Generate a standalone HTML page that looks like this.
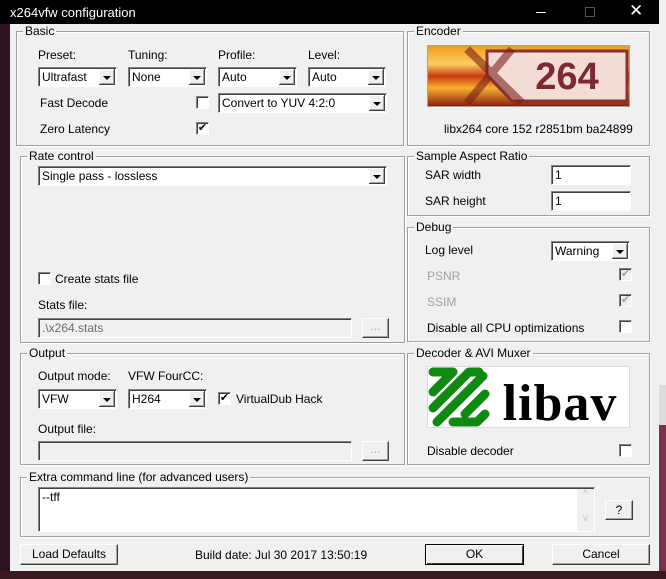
<!DOCTYPE html>
<html><head><meta charset="utf-8"><style>
*{box-sizing:border-box;margin:0;padding:0}
body{width:666px;height:579px;overflow:hidden;background:#2a1420;font-family:"Liberation Sans",sans-serif;font-size:12px;color:#000;position:relative}
.a{position:absolute}
#title{left:0;top:0;width:659px;height:24px;background:#000;color:#fff;font-size:12px}
#win{left:10px;top:24px;width:649px;height:547px;background:#f0f0f0}
.g{position:absolute;border:1px solid #a0a0a0;box-shadow:inset 1px 1px 0 #fff,1px 1px 0 #fff}
.lg{position:absolute;top:-8px;left:6px;background:#f0f0f0;padding:0 2px;line-height:14px;white-space:nowrap}
.t{position:absolute;white-space:nowrap;line-height:14px}
.cb{position:absolute;height:20px;background:#fff;border:1px solid;border-color:#828282 #fff #fff #828282;box-shadow:inset 1px 1px 0 #404040;padding:2px 0 0 3px;line-height:14px;white-space:nowrap}
.cb::after{content:"";position:absolute;right:1px;top:1px;width:16px;height:16px;background:#f0f0f0;box-shadow:inset -1px -1px 0 #404040,inset 1px 1px 0 #fff,inset -2px -2px 0 #a0a0a0}
.cb::before{content:"";position:absolute;right:5px;top:8px;border:4px solid transparent;border-top:4px solid #000;border-bottom:0;z-index:2}
.ck{position:absolute;width:13px;height:13px;background:#fff;border:1px solid;border-color:#828282 #fff #fff #828282;box-shadow:inset 1px 1px 0 #404040;font-size:11px;line-height:11px;text-align:center}
.ck.d{background:#f0f0f0;color:#a0a0a0}
.ed{position:absolute;height:20px;background:#fff;border:1px solid;border-color:#828282 #fff #fff #828282;box-shadow:inset 1px 1px 0 #404040;padding:2px 3px;line-height:14px}
.ed.d{background:#f0f0f0;color:#6d6d6d}
.bt{position:absolute;background:#f0f0f0;border:1px solid;border-color:#fff #404040 #404040 #fff;box-shadow:inset -1px -1px 0 #a0a0a0;text-align:center;line-height:18px}
.gr{color:#a0a0a0}
</style></head><body>
<div class="a" style="left:659px;top:0;width:7px;height:385px;background:#f0f0f0"></div>
<div class="a" style="left:659px;top:385px;width:7px;height:40px;background:#dcdcdc"></div>
<div class="a" style="left:659px;top:425px;width:7px;height:154px;background:#7a3050"></div>
<div class="a" style="left:0;top:571px;width:666px;height:8px;background:#3a1a20"></div>
<div id="title" class="a"><span class="a" style="left:10px;top:5px;font-size:13px">x264vfw configuration</span>
<span class="a" style="left:536px;top:12px;width:10px;height:1px;background:#fff"></span>
<span class="a" style="left:585px;top:7px;width:10px;height:10px;border:1px solid #555"></span>
<span class="a" style="left:629px;top:2px;font-size:17px;line-height:18px">✕</span></div>
<div id="win" class="a"></div>

<div class="g" style="left:16px;top:31px;width:388px;height:115px"><span class="lg">Basic</span></div>
<span class="t" style="left:38px;top:48px">Preset:</span>
<span class="t" style="left:128px;top:48px">Tuning:</span>
<span class="t" style="left:218px;top:48px">Profile:</span>
<span class="t" style="left:308px;top:48px">Level:</span>
<div class="cb" style="left:38px;top:67px;width:79px">Ultrafast</div>
<div class="cb" style="left:128px;top:67px;width:79px">None</div>
<div class="cb" style="left:218px;top:67px;width:79px">Auto</div>
<div class="cb" style="left:308px;top:67px;width:78px">Auto</div>
<span class="t" style="left:40px;top:96px">Fast Decode</span>
<div class="ck" style="left:196px;top:96px"></div>
<div class="cb" style="left:218px;top:93px;width:169px">Convert to YUV 4:2:0</div>
<span class="t" style="left:40px;top:122px">Zero Latency</span>
<div class="ck" style="left:196px;top:122px">✔</div>

<div class="g" style="left:407px;top:31px;width:243px;height:115px"><span class="lg">Encoder</span></div>
<svg class="a" style="left:427px;top:45px" width="203" height="62" viewBox="0 0 203 62">
<defs><linearGradient id="f" x1="0" y1="0" x2="0" y2="1"><stop offset="0" stop-color="#f39a20"/><stop offset=".3" stop-color="#fbd060"/><stop offset=".5" stop-color="#c83a10"/><stop offset=".7" stop-color="#f8b030"/><stop offset="1" stop-color="#8a2010"/></linearGradient></defs>
<rect width="203" height="62" fill="#a0a0a0"/><rect x="1" y="1" width="201" height="60" fill="url(#f)"/>
<path d="M60 6 H200 V56 H85 L60 30 Z" fill="#f3dcd6"/>
<path d="M60 6 H200 V56 H85 L60 30 Z" fill="none" stroke="#8a3030" stroke-width="3"/>
<path d="M40 4 L95 58 M85 4 L40 58" stroke="#7a2218" stroke-width="8" opacity=".6"/>
<text x="140" y="44" text-anchor="middle" font-family="Liberation Sans,sans-serif" font-weight="bold" font-size="38" fill="#7a2a30">264</text>
</svg>
<span class="t" style="left:444px;top:122px">libx264 core 152 r2851bm ba24899</span>

<div class="g" style="left:20px;top:156px;width:385px;height:187px"><span class="lg">Rate control</span></div>
<div class="cb" style="left:38px;top:166px;width:349px">Single pass - lossless</div>
<div class="ck" style="left:38px;top:272px"></div>
<span class="t" style="left:55px;top:272px">Create stats file</span>
<span class="t" style="left:38px;top:298px">Stats file:</span>
<div class="ed d" style="left:38px;top:318px;width:314px">.\x264.stats</div>
<div class="bt gr" style="left:362px;top:318px;width:27px;height:20px;line-height:14px">...</div>

<div class="g" style="left:407px;top:156px;width:243px;height:60px"><span class="lg">Sample Aspect Ratio</span></div>
<span class="t" style="left:425px;top:168px">SAR width</span>
<div class="ed" style="left:551px;top:165px;width:80px">1</div>
<span class="t" style="left:425px;top:194px">SAR height</span>
<div class="ed" style="left:551px;top:191px;width:80px">1</div>

<div class="g" style="left:407px;top:227px;width:243px;height:115px"><span class="lg">Debug</span></div>
<span class="t" style="left:425px;top:243px">Log level</span>
<div class="cb" style="left:551px;top:241px;width:79px">Warning</div>
<span class="t gr" style="left:427px;top:269px">PSNR</span>
<div class="ck d" style="left:619px;top:268px">✔</div>
<span class="t gr" style="left:427px;top:295px">SSIM</span>
<div class="ck d" style="left:619px;top:294px">✔</div>
<span class="t" style="left:427px;top:321px">Disable all CPU optimizations</span>
<div class="ck" style="left:619px;top:320px"></div>

<div class="g" style="left:20px;top:353px;width:385px;height:112px"><span class="lg">Output</span></div>
<span class="t" style="left:38px;top:369px">Output mode:</span>
<span class="t" style="left:128px;top:369px">VFW FourCC:</span>
<div class="cb" style="left:38px;top:389px;width:79px">VFW</div>
<div class="cb" style="left:128px;top:389px;width:79px">H264</div>
<div class="ck" style="left:218px;top:392px">✔</div>
<span class="t" style="left:236px;top:392px">VirtualDub Hack</span>
<span class="t" style="left:38px;top:422px">Output file:</span>
<div class="ed d" style="left:38px;top:441px;width:314px"></div>
<div class="bt gr" style="left:362px;top:441px;width:27px;height:20px;line-height:14px">...</div>

<div class="g" style="left:407px;top:353px;width:243px;height:112px"><span class="lg">Decoder &amp; AVI Muxer</span></div>
<svg class="a" style="left:427px;top:366px" width="203" height="62" viewBox="0 0 203 62">
<rect width="203" height="62" fill="#ddd"/><rect x="1" y="1" width="201" height="60" fill="#fff"/>
<g stroke="#0f8a10" stroke-width="9" fill="none" stroke-linejoin="round" stroke-linecap="round">
<path d="M6 6 H26 L6 26 M6 42 L42 6 H52 M10 56 L56 10 M26 56 H50 L58 48 M58 28 L38 48"/>
</g>
<text x="133" y="54" text-anchor="middle" font-family="Liberation Serif,serif" font-weight="bold" font-size="52" letter-spacing="1" fill="#000">libav</text>
</svg>
<span class="t" style="left:427px;top:444px">Disable decoder</span>
<div class="ck" style="left:619px;top:444px"></div>

<div class="g" style="left:20px;top:477px;width:630px;height:60px"><span class="lg">Extra command line (for advanced users)</span></div>
<div class="ed" style="left:38px;top:487px;width:557px;height:45px;padding:2px 3px">--tff</div>
<div class="a" style="left:577px;top:489px;width:17px;height:42px;background:#f0f0f0;color:#c0c0c0;font-size:10px;text-align:center;line-height:12px">^<br><br>v</div>
<div class="bt" style="left:605px;top:500px;width:28px;height:20px">?</div>

<div class="bt" style="left:20px;top:544px;width:98px;height:21px">Load Defaults</div>
<span class="t" style="left:195px;top:548px">Build date: Jul 30 2017 13:50:19</span>
<div class="bt" style="left:425px;top:544px;width:99px;height:21px;border-color:#000;box-shadow:inset 1px 1px 0 #fff,inset -1px -1px 0 #404040">OK</div>
<div class="bt" style="left:552px;top:544px;width:98px;height:21px">Cancel</div>
</body></html>
